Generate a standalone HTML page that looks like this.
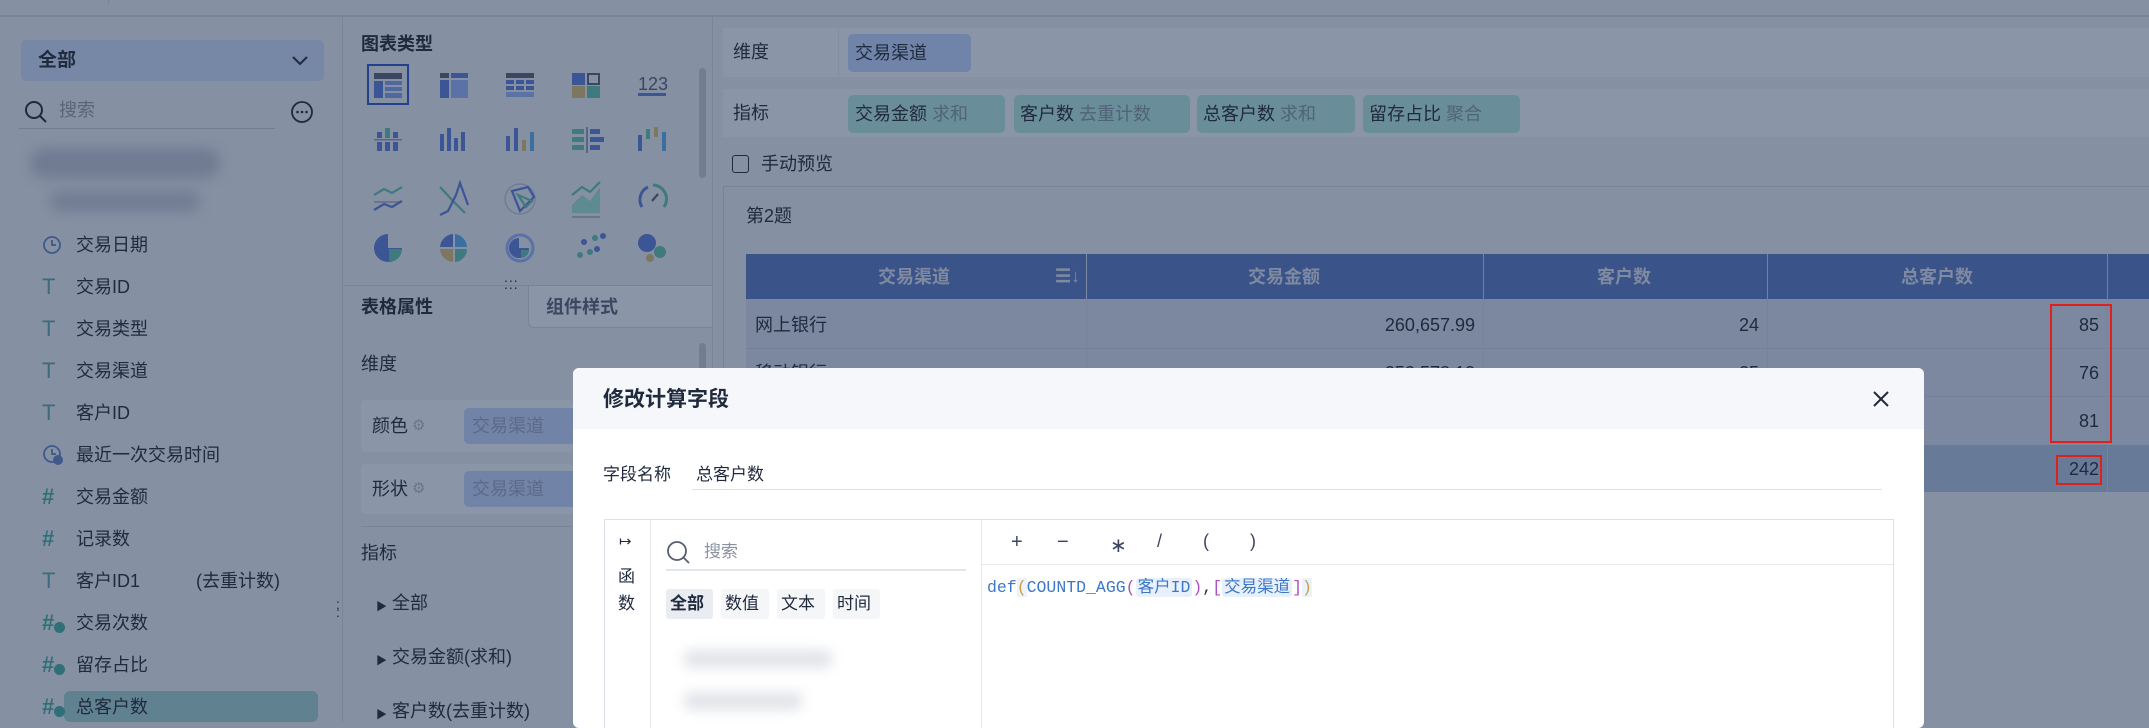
<!DOCTYPE html>
<html><head><meta charset="utf-8"><style>
*{margin:0;padding:0;box-sizing:border-box}
body{width:2149px;height:722px;overflow:hidden;background:#8690a3;font-family:"Liberation Sans","Noto Sans CJK SC",sans-serif;color:#1f2a3d;position:relative}
.a{position:absolute;white-space:nowrap}
.t{font-size:18px;line-height:24px}
</style></head><body>
<!-- top line -->
<div class="a" style="left:0;top:15px;width:2149px;height:2px;background:#7a8498"></div>
<div class="a" style="left:108px;top:0;width:1px;height:5px;background:#7a8498"></div>
<!-- left/middle dividers -->
<div class="a" style="left:342px;top:16px;width:1px;height:706px;background:#7a8498"></div>
<div class="a" style="left:712px;top:16px;width:1px;height:706px;background:#7a8498"></div>

<!-- LEFT PANEL -->
<div class="a" style="left:21px;top:40px;width:303px;height:41px;background:#7688a6;border-radius:5px"></div>
<div class="a t" style="left:38px;top:49px;font-weight:bold;font-size:19px">全部</div>
<svg class="a" style="left:290px;top:54px" width="20" height="14"><path d="M3 3 L10 10 L17 3" stroke="#1f2a3d" stroke-width="2" fill="none"/></svg>
<svg class="a" style="left:24px;top:100px" width="24" height="24"><circle cx="10" cy="10" r="8" stroke="#1f2a3d" stroke-width="2" fill="none"/><path d="M16 16 L22 22" stroke="#1f2a3d" stroke-width="2"/></svg>
<div class="a t" style="left:59px;top:98px;color:#5a657a">搜索</div>
<div class="a" style="left:19px;top:128px;width:256px;height:1px;background:#727d92"></div>
<svg class="a" style="left:290px;top:100px" width="24" height="24"><circle cx="12" cy="12" r="10" stroke="#1f2a3d" stroke-width="1.8" fill="none"/><circle cx="7.5" cy="12" r="1.3" fill="#1f2a3d"/><circle cx="12" cy="12" r="1.3" fill="#1f2a3d"/><circle cx="16.5" cy="12" r="1.3" fill="#1f2a3d"/></svg>
<div class="a" style="left:30px;top:148px;width:190px;height:30px;background:#707b92;border-radius:15px;filter:blur(6px)"></div>
<div class="a" style="left:50px;top:190px;width:150px;height:22px;background:#727d94;border-radius:11px;filter:blur(6px)"></div>

<div class="a" style="left:64px;top:691px;width:254px;height:31px;background:#5f8190;border-radius:6px"></div>

<svg class="a" style="left:42px;top:235px" width="22" height="22"><circle cx="10" cy="10" r="8" stroke="#3e5a8c" stroke-width="1.8" fill="none"/><path d="M10 5 V10 H14" stroke="#3e5a8c" stroke-width="1.8" fill="none"/></svg>
<div class="a t" style="left:76px;top:233px">交易日期</div>
<div class="a" style="left:42px;top:274px;font-size:22px;color:#3d6a7c">T</div><div class="a t" style="left:76px;top:275px">交易ID</div>
<div class="a" style="left:42px;top:316px;font-size:22px;color:#3d6a7c">T</div><div class="a t" style="left:76px;top:317px">交易类型</div>
<div class="a" style="left:42px;top:358px;font-size:22px;color:#3d6a7c">T</div><div class="a t" style="left:76px;top:359px">交易渠道</div>
<div class="a" style="left:42px;top:400px;font-size:22px;color:#3d6a7c">T</div><div class="a t" style="left:76px;top:401px">客户ID</div>
<svg class="a" style="left:42px;top:444px" width="22" height="22"><circle cx="10" cy="10" r="8" stroke="#3e5a8c" stroke-width="1.8" fill="none"/><path d="M10 5 V10 H14" stroke="#3e5a8c" stroke-width="1.8" fill="none"/><circle cx="16" cy="16" r="5" fill="#3e5a8c"/></svg>
<div class="a t" style="left:76px;top:443px">最近一次交易时间</div>
<div class="a" style="left:42px;top:484px;font-size:22px;font-weight:bold;color:#2f7078">#</div><div class="a t" style="left:76px;top:485px">交易金额</div>
<div class="a" style="left:42px;top:526px;font-size:22px;font-weight:bold;color:#2f7078">#</div><div class="a t" style="left:76px;top:527px">记录数</div>
<div class="a" style="left:42px;top:568px;font-size:22px;color:#3d6a7c">T</div><div class="a t" style="left:76px;top:569px">客户ID1</div><div class="a t" style="left:196px;top:569px">(去重计数)</div>
<div class="a" style="left:42px;top:610px;font-size:22px;font-weight:bold;color:#2f7078">#</div><div class="a" style="left:54px;top:622px;width:11px;height:11px;border-radius:50%;background:#2f7078"></div><div class="a t" style="left:76px;top:611px">交易次数</div>
<div class="a" style="left:42px;top:652px;font-size:22px;font-weight:bold;color:#2f7078">#</div><div class="a" style="left:54px;top:664px;width:11px;height:11px;border-radius:50%;background:#2f7078"></div><div class="a t" style="left:76px;top:653px">留存占比</div>
<div class="a" style="left:42px;top:694px;font-size:22px;font-weight:bold;color:#2f7078">#</div><div class="a" style="left:54px;top:706px;width:11px;height:11px;border-radius:50%;background:#2f7078"></div><div class="a t" style="left:76px;top:695px">总客户数</div>

<div class="a" style="left:336px;top:600px;font-size:14px;line-height:8px;color:#1f2a3d;letter-spacing:2px">:<br>:</div>

<!-- MIDDLE PANEL -->
<div class="a t" style="left:361px;top:32px;font-weight:bold">图表类型</div>
<div class="a" style="left:367px;top:64px;width:42px;height:41px;border:2.5px solid #23418a"></div>
<svg class="a" style="left:350px;top:55px" width="340" height="220">
<g fill="#3c5595">
<rect x="24" y="18" width="28" height="6" fill="#3b4660"/><rect x="24" y="26" width="9" height="17"/><rect x="35" y="26" width="17" height="4" fill="#5068a0"/><rect x="35" y="32" width="17" height="4" fill="#5068a0"/><rect x="35" y="38" width="17" height="5" fill="#5068a0"/>
<rect x="90" y="18" width="9" height="5" fill="#3b4660"/><rect x="101" y="18" width="17" height="5"/><rect x="90" y="25" width="9" height="18"/><rect x="101" y="25" width="17" height="18" fill="#5a72a8"/>
<rect x="156" y="18" width="28" height="5" fill="#3b4660"/><rect x="156" y="25" width="8" height="4"/><rect x="166" y="25" width="8" height="4"/><rect x="176" y="25" width="8" height="4"/><rect x="156" y="31" width="8" height="4"/><rect x="166" y="31" width="8" height="4"/><rect x="176" y="31" width="8" height="4"/><rect x="156" y="37" width="28" height="5" fill="#5a72a8"/>
<rect x="222" y="18" width="13" height="12"/><rect x="238" y="19" width="11" height="10" fill="none" stroke="#3b4660" stroke-width="2"/><rect x="222" y="31" width="13" height="12" fill="#7d7660"/><rect x="237" y="31" width="13" height="12" fill="#3e7a7e"/>
<rect x="288" y="38" width="28" height="3"/>
</g>
<text x="288" y="35" font-family="Liberation Sans" font-size="18" fill="#3b4660">123</text>
<g fill="#3c5595">
<rect x="27" y="77" width="5" height="6"/><rect x="35" y="73" width="5" height="10" fill="#3e7a7e"/><rect x="43" y="77" width="5" height="6"/><rect x="24" y="84" width="28" height="1.5" fill="#5a6580"/><rect x="27" y="87" width="5" height="9"/><rect x="35" y="87" width="5" height="9"/><rect x="43" y="87" width="5" height="9"/>
<rect x="90" y="79" width="4" height="17"/><rect x="97" y="73" width="4" height="23"/><rect x="104" y="83" width="4" height="13"/><rect x="111" y="77" width="4" height="19"/>
<rect x="156" y="81" width="4" height="15"/><rect x="164" y="73" width="4" height="23"/><rect x="172" y="85" width="4" height="11" fill="#7d7660"/><rect x="180" y="77" width="4" height="19" fill="#3a6fa0"/>
<rect x="222" y="74" width="12" height="5" fill="#3e7a7e"/><rect x="222" y="82" width="12" height="5" fill="#3e7a7e"/><rect x="222" y="90" width="12" height="5" fill="#3e7a7e"/><rect x="236" y="72" width="2" height="26" fill="#5a6580"/><rect x="240" y="74" width="10" height="5"/><rect x="240" y="82" width="14" height="5"/><rect x="240" y="90" width="10" height="5"/>
<rect x="288" y="80" width="4" height="16"/><rect x="296" y="74" width="4" height="10" fill="#3e7a7e"/><rect x="304" y="72" width="4" height="10" fill="#7d7660"/><rect x="312" y="77" width="4" height="19" fill="#3a6fa0"/>
</g>
<g fill="none" stroke-width="2.2">
<path d="M24 140 L34 134 L42 138 L52 132" stroke="#3e7a7e"/><path d="M24 147 L52 147" stroke="#5a6580" stroke-width="1.2"/><path d="M24 155 L34 149 L42 152 L52 146" stroke="#3c5595"/>
<path d="M90 132 L104 147 L115 158" stroke="#3e7a7e"/><path d="M90 160 L98 156 L106 140 L110 128 L118 150" stroke="#3c5595"/>
<circle cx="170" cy="144" r="15" stroke="#6a7895" stroke-width="1.2"/><path d="M162 136 L178 132 L184 142 L170 156 Z" stroke="#3c5595"/><path d="M168 140 L182 146 L176 152 Z" stroke="#3e7a7e"/>
<path d="M222 150 L232 140 L240 146 L250 132 L250 158 L222 158 Z" fill="#5e8a94" stroke="none"/><path d="M222 140 L232 132 L240 137 L250 127" stroke="#3e7a7e"/><path d="M222 162 L250 162" stroke="#5a6580" stroke-width="1.2"/>
<path d="M292 152 A14 14 0 0 1 298 132" stroke="#3c5595" stroke-width="3"/><path d="M303 130 A14 14 0 0 1 314 152" stroke="#3e7a7e" stroke-width="3"/><path d="M302 146 L308 139" stroke="#3b4660"/>
</g>
<g>
<path d="M38 179 A14 14 0 1 0 52 193 L38 193 Z" fill="#3c5595"/><path d="M39 194 H52 A13 13 0 0 1 39 207 Z" fill="#3e7a7e"/>
<path d="M103 179 A14 14 0 0 0 90 192 H103 Z" fill="#3c5595"/><path d="M105 179 A14 14 0 0 1 117 192 H105 Z" fill="#3a6fa0"/><path d="M90 194 H103 V207 A14 14 0 0 1 90 194 Z" fill="#7d7660"/><path d="M105 194 H117 A13 13 0 0 1 105 207 Z" fill="#3e7a7e"/>
<circle cx="170" cy="193" r="13" fill="none" stroke="#5a72a8" stroke-width="3"/><path d="M169 183 A10 10 0 1 0 179 193 L169 193 Z" fill="#3c5595"/><path d="M171 195 H179 A8 8 0 0 1 171 203 Z" fill="#3e7a7e"/>
<circle cx="230" cy="200" r="3" fill="#3e7a7e"/><circle cx="234" cy="187" r="3" fill="#3c5595"/><circle cx="240" cy="197" r="3" fill="#3e7a7e"/><circle cx="245" cy="183" r="3" fill="#3e7a7e"/><circle cx="247" cy="194" r="3" fill="#3c5595"/><circle cx="253" cy="181" r="3" fill="#3c5595"/>
<circle cx="297" cy="188" r="9" fill="#3c5595"/><circle cx="310" cy="197" r="6" fill="#3e7a7e"/><circle cx="300" cy="203" r="4" fill="#7d7660"/>
</g>
</svg>
<div class="a" style="left:699px;top:68px;width:7px;height:110px;border-radius:4px;background:#727d92"></div>
<div class="a" style="left:504px;top:274px;font-size:14px;line-height:7px;letter-spacing:1px">...<br>...</div>
<div class="a" style="left:342px;top:285px;width:370px;height:1px;background:#7a8498"></div>
<div class="a" style="left:528px;top:286px;width:184px;height:42px;background:#8b95a8;border-left:1px solid #7a8498;border-bottom:1px solid #7a8498;border-radius:0 0 0 6px"></div>
<div class="a t" style="left:361px;top:295px;font-weight:bold">表格属性</div>
<div class="a t" style="left:546px;top:295px;font-weight:bold;color:#3b4660">组件样式</div>
<div class="a" style="left:699px;top:343px;width:7px;height:60px;border-radius:4px;background:#727d92"></div>
<div class="a t" style="left:361px;top:352px">维度</div>
<div class="a" style="left:361px;top:400px;width:212px;height:52px;background:#8b95a8;border-radius:4px"></div>
<div class="a" style="left:464px;top:408px;width:109px;height:36px;background:#7183a6;border-radius:5px 0 0 5px"></div>
<div class="a t" style="left:372px;top:414px">颜色</div><div class="a" style="left:412px;top:416px;font-size:15px;color:#6b7589">⚙</div>
<div class="a t" style="left:472px;top:414px;color:#5a6a8a">交易渠道</div>
<div class="a" style="left:361px;top:464px;width:212px;height:50px;background:#8b95a8;border-radius:4px"></div>
<div class="a" style="left:464px;top:471px;width:109px;height:36px;background:#7183a6;border-radius:5px 0 0 5px"></div>
<div class="a t" style="left:372px;top:477px">形状</div><div class="a" style="left:412px;top:479px;font-size:15px;color:#6b7589">⚙</div>
<div class="a t" style="left:472px;top:477px;color:#5a6a8a">交易渠道</div>
<div class="a" style="left:361px;top:526px;width:212px;height:1px;background:#7a8498"></div>
<div class="a t" style="left:361px;top:541px">指标</div>
<div class="a" style="left:376px;top:598px;font-size:11px">▶</div><div class="a t" style="left:392px;top:591px">全部</div>
<div class="a" style="left:376px;top:652px;font-size:11px">▶</div><div class="a t" style="left:392px;top:645px">交易金额(求和)</div>
<div class="a" style="left:376px;top:706px;font-size:11px">▶</div><div class="a t" style="left:392px;top:699px">客户数(去重计数)</div>

<!-- RIGHT AREA -->
<div class="a" style="left:723px;top:28px;width:1426px;height:49px;background:#8b95a8"></div>
<div class="a" style="left:838px;top:28px;width:1px;height:49px;background:#838ea2"></div>
<div class="a t" style="left:733px;top:40px">维度</div>
<div class="a" style="left:848px;top:34px;width:123px;height:38px;background:#6f84a8;border-radius:5px"></div>
<div class="a t" style="left:855px;top:41px">交易渠道</div>
<div class="a" style="left:723px;top:89px;width:1426px;height:48px;background:#8b95a8"></div>
<div class="a t" style="left:733px;top:101px">指标</div>
<div class="a" style="left:848px;top:95px;width:157px;height:38px;background:#6a8d9a;border-radius:5px"></div>
<div class="a t" style="left:855px;top:102px">交易金额 <span style="color:#4f6478">求和</span></div>
<div class="a" style="left:1014px;top:95px;width:176px;height:38px;background:#6a8d9a;border-radius:5px"></div>
<div class="a t" style="left:1020px;top:102px">客户数 <span style="color:#4f6478">去重计数</span></div>
<div class="a" style="left:1197px;top:95px;width:158px;height:38px;background:#6a8d9a;border-radius:5px"></div>
<div class="a t" style="left:1203px;top:102px">总客户数 <span style="color:#4f6478">求和</span></div>
<div class="a" style="left:1363px;top:95px;width:157px;height:38px;background:#6a8d9a;border-radius:5px"></div>
<div class="a t" style="left:1369px;top:102px">留存占比 <span style="color:#4f6478">聚合</span></div>
<div class="a" style="left:732px;top:155px;width:17px;height:18px;border:1.5px solid #1f2a3d;border-radius:3px"></div>
<div class="a t" style="left:761px;top:152px">手动预览</div>
<div class="a" style="left:723px;top:186px;width:1426px;height:536px;border:1px solid #7a8498;border-right:none;border-bottom:none"></div>
<div class="a t" style="left:746px;top:204px">第2题</div>
<!-- table -->
<div class="a" style="left:746px;top:254px;width:1403px;height:45px;background:#3a5489"></div>
<div class="a" style="left:746px;top:299px;width:1403px;height:146px;background:#7c88a0"></div>
<div class="a" style="left:746px;top:445px;width:1403px;height:47px;background:#677a98"></div>
<div class="a" style="left:746px;top:348px;width:1403px;height:1px;background:#75819a"></div>
<div class="a" style="left:746px;top:396px;width:1403px;height:1px;background:#75819a"></div>
<div class="a" style="left:1086px;top:254px;width:1px;height:238px;background:#76839c"></div>
<div class="a" style="left:1483px;top:254px;width:1px;height:238px;background:#76839c"></div>
<div class="a" style="left:1767px;top:254px;width:1px;height:238px;background:#76839c"></div>
<div class="a" style="left:2107px;top:254px;width:1px;height:238px;background:#76839c"></div>
<div class="a" style="left:1086px;top:254px;width:1px;height:45px;background:#7c8aa6"></div>
<div class="a t" style="left:878px;top:265px;font-weight:bold;color:#7f8aa0">交易渠道</div>
<div class="a t" style="left:1055px;top:264px;font-weight:bold;color:#7f8aa0">☰↓</div>
<div class="a t" style="left:1248px;top:265px;font-weight:bold;color:#7f8aa0">交易金额</div>
<div class="a t" style="left:1597px;top:265px;font-weight:bold;color:#7f8aa0">客户数</div>
<div class="a t" style="left:1901px;top:265px;font-weight:bold;color:#7f8aa0">总客户数</div>
<div class="a t" style="left:755px;top:313px">网上银行</div>
<div class="a t" style="left:755px;top:361px">移动银行</div>
<div class="a t" style="left:1475px;top:313px;transform:translateX(-100%)">260,657.99</div>
<div class="a t" style="left:1475px;top:361px;transform:translateX(-100%)">252,578.12</div>
<div class="a t" style="left:1759px;top:313px;transform:translateX(-100%)">24</div>
<div class="a t" style="left:1759px;top:361px;transform:translateX(-100%)">25</div>
<div class="a t" style="left:2099px;top:313px;transform:translateX(-100%)">85</div>
<div class="a t" style="left:2099px;top:361px;transform:translateX(-100%)">76</div>
<div class="a t" style="left:2099px;top:409px;transform:translateX(-100%)">81</div>
<div class="a t" style="left:2099px;top:457px;transform:translateX(-100%)">242</div>
<div class="a" style="left:2050px;top:304px;width:62px;height:139px;border:2.5px solid #e0201a"></div>
<div class="a" style="left:2056px;top:455px;width:46px;height:30px;border:2.5px solid #e0201a"></div>

<!-- MODAL -->
<div class="a" style="left:573px;top:368px;width:1351px;height:360px;background:#fff;border-radius:6px;overflow:hidden">
 <div class="a" style="left:0;top:0;width:1351px;height:61px;background:#f6f7fa"></div>
 <div class="a" style="left:30px;top:18px;font-size:21px;font-weight:bold;line-height:28px;color:#1f2a3d">修改计算字段</div>
 <svg class="a" style="left:1299px;top:22px" width="18" height="18"><path d="M2 2 L16 16 M16 2 L2 16" stroke="#1f2a3d" stroke-width="2"/></svg>
 <div class="a t" style="left:30px;top:95px;font-size:17px">字段名称</div>
 <div class="a t" style="left:123px;top:95px;font-size:17px">总客户数</div>
 <div class="a" style="left:119px;top:121px;width:1190px;height:1px;background:#dcdfe5"></div>
 <div class="a" style="left:31px;top:151px;width:1290px;height:220px;border:1px solid #dcdfe5"></div>
 <div class="a" style="left:77px;top:152px;width:1px;height:220px;background:#e6e8ec"></div>
 <div class="a" style="left:408px;top:152px;width:1px;height:220px;background:#e6e8ec"></div>
 <div class="a" style="left:409px;top:196px;width:911px;height:1px;background:#e6e8ec"></div>
 <div class="a" style="left:46px;top:164px;font-size:15px;color:#1f2a3d">↦</div>
 <div class="a t" style="left:45px;top:197px;font-size:17px">函</div>
 <div class="a t" style="left:45px;top:224px;font-size:17px">数</div>
 <svg class="a" style="left:93px;top:172px" width="26" height="26"><circle cx="11" cy="11" r="9" stroke="#555f70" stroke-width="1.8" fill="none"/><path d="M17 17 L23 23" stroke="#555f70" stroke-width="1.8"/></svg>
 <div class="a t" style="left:131px;top:172px;font-size:17px;color:#8a93a3">搜索</div>
 <div class="a" style="left:93px;top:201px;width:300px;height:2px;background:#e3e5ea"></div>
 <div class="a" style="left:93px;top:221px;width:47px;height:30px;background:#e9ecf1;border-radius:3px"></div>
 <div class="a t" style="left:97px;top:224px;font-size:17px;font-weight:bold">全部</div>
 <div class="a" style="left:148px;top:221px;width:48px;height:30px;background:#f5f6f8;border-radius:3px"></div>
 <div class="a t" style="left:152px;top:224px;font-size:17px">数值</div>
 <div class="a" style="left:204px;top:221px;width:48px;height:30px;background:#f5f6f8;border-radius:3px"></div>
 <div class="a t" style="left:208px;top:224px;font-size:17px">文本</div>
 <div class="a" style="left:260px;top:221px;width:47px;height:30px;background:#f5f6f8;border-radius:3px"></div>
 <div class="a t" style="left:264px;top:224px;font-size:17px">时间</div>
 <div class="a" style="left:110px;top:282px;width:150px;height:18px;background:#e2e4e8;border-radius:9px;filter:blur(6px)"></div>
 <div class="a" style="left:110px;top:324px;width:120px;height:18px;background:#e2e4e8;border-radius:9px;filter:blur(6px)"></div>
 <div class="a" style="left:438px;top:163px;font-size:20px;color:#3b4660;word-spacing:0">+</div>
 <div class="a" style="left:484px;top:163px;font-size:20px;color:#3b4660">−</div>
 <div class="a" style="left:537px;top:165px;font-size:20px;color:#3b4660">∗</div>
 <div class="a" style="left:584px;top:163px;font-size:18px;color:#3b4660">/</div>
 <div class="a" style="left:630px;top:163px;font-size:18px;color:#3b4660">(</div>
 <div class="a" style="left:677px;top:163px;font-size:18px;color:#3b4660">)</div>
 <div class="a" style="left:414px;top:208px;font-family:'Liberation Mono','Noto Sans CJK SC',monospace;font-size:16.5px;line-height:24px;color:#3b78c8">def<span style="color:#c8a24a;background:#eef3fb">(</span>COUNTD_AGG<span style="color:#b04fc0">(</span><span style="background:#e8f0fc;border-radius:3px;padding:0 2px">客户ID</span><span style="color:#b04fc0">)</span><span style="color:#333">,</span><span style="color:#b04fc0">[</span><span style="background:#e8f0fc;border-radius:3px;padding:0 2px">交易渠道</span><span style="color:#b04fc0">]</span><span style="color:#c8a24a;background:#eef3fb">)</span></div>
</div>
</body></html>
